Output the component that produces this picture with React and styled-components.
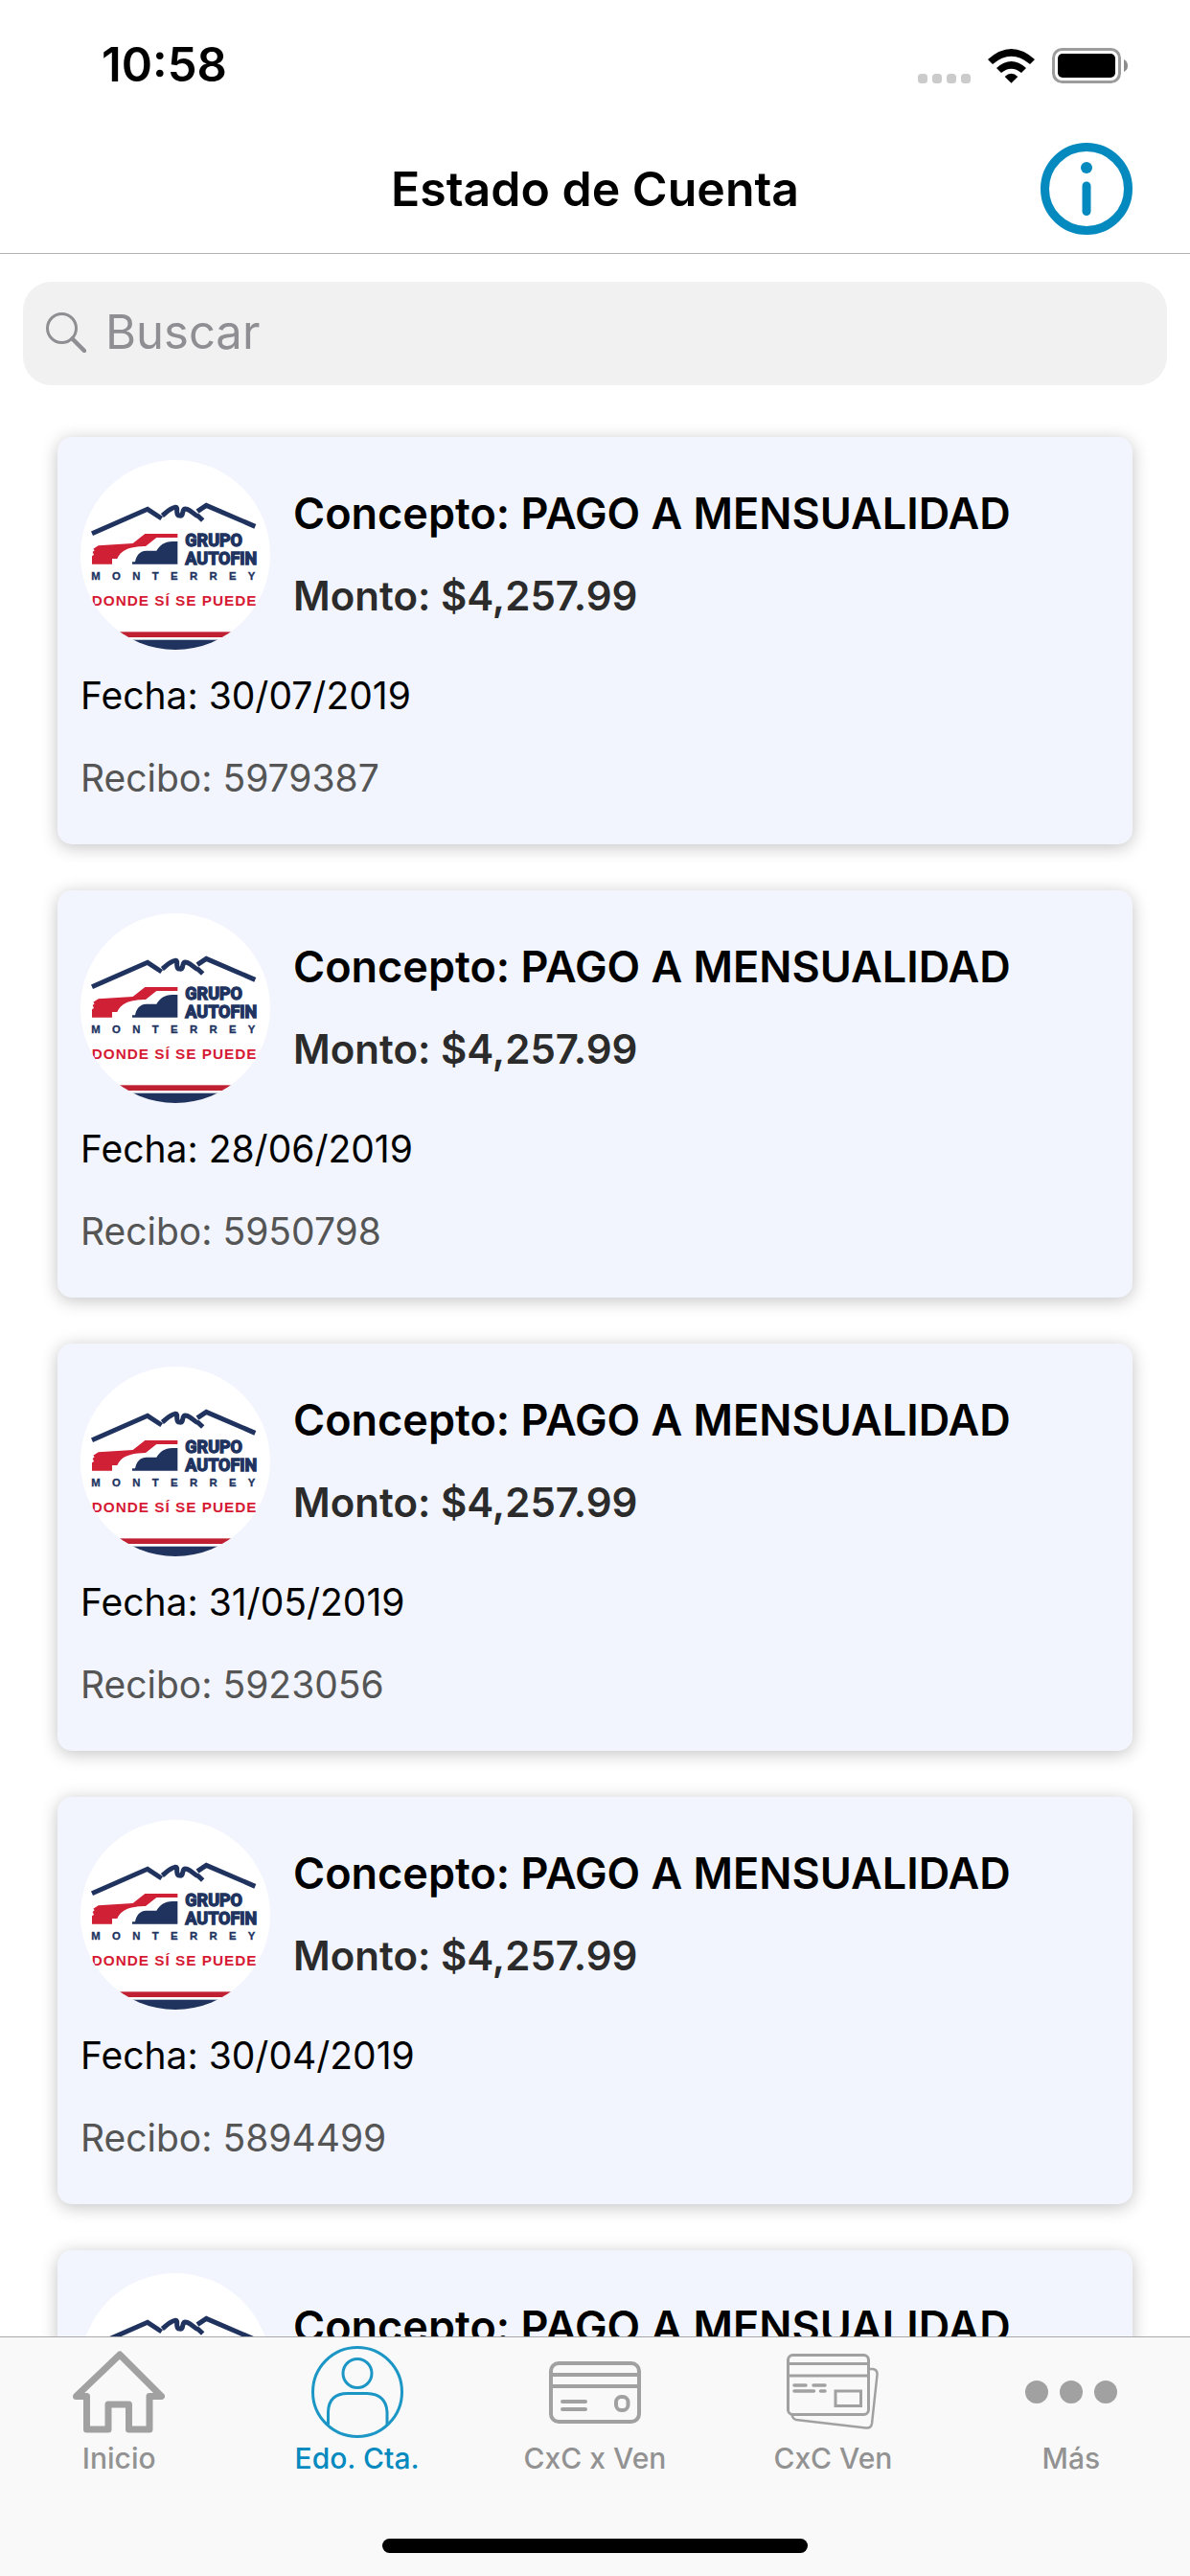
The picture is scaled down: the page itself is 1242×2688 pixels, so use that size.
import React from "react";
import styled, { createGlobalStyle } from "styled-components";

const GlobalStyle = createGlobalStyle`
  * {
    box-sizing: border-box;
  }

  body {
    margin: 0;
    background: #ffffff;
    font-family: Inter, "Liberation Sans", sans-serif;
  }
`;

const ScreenStyled = styled.div`
  display: flex;
  flex-direction: column;
  height: 100vh;
  overflow: hidden;
`;

const StatusBarStyled = styled.div`
  display: flex;
  justify-content: space-between;
  align-items: center;
  height: 132px;
  padding: 4px 65px 0 106px;

  .time {
    font-size: 49px;
    line-height: 60px;
    font-weight: 600;
  }

  .indicators {
    display: flex;
    align-items: flex-end;
    gap: 18px;
  }

  svg {
    display: block;
  }
`;

const NavBarStyled = styled.header`
  display: grid;
  grid-template-columns: 96px 1fr 96px;
  align-items: center;
  height: 133px;
  padding: 0 60px 2px;
  border-bottom: 1px solid #b2b2b2;

  h1 {
    grid-column: 2;
    margin: 0;
    text-align: center;
    font-size: 50px;
    line-height: 60px;
    font-weight: 600;
  }
`;

const IconButton = styled.button`
  width: 96px;
  height: 96px;
  padding: 0;
  border: 0;
  background: none;
  cursor: pointer;

  svg {
    display: block;
  }
`;

const SearchStyled = styled.label`
  display: flex;
  flex: 0 0 auto;
  align-items: center;
  gap: 20px;
  height: 108px;
  margin: 29px 24px 54px;
  padding: 0 24px 2px;
  border-radius: 30px;
  background: #f1f1f2;

  svg {
    flex: 0 0 auto;
  }

  input {
    flex: 1;
    min-width: 0;
    padding: 0;
    border: 0;
    outline: 0;
    background: transparent;
    font-family: inherit;
    font-size: 49px;
    line-height: 60px;
    color: #000000;
  }

  input::placeholder {
    color: #8e8e93;
    opacity: 1;
  }
`;

const ListStyled = styled.main`
  display: flex;
  flex: 1;
  flex-direction: column;
  min-height: 0;
  overflow: hidden;
`;

const CardsStyled = styled.ul`
  display: flex;
  flex-direction: column;
  gap: 48px;
  margin: 0;
  padding: 0 60px;
  list-style: none;
`;

const CardStyled = styled.li`
  flex: 0 0 auto;
  height: 425px;
  padding: 24px;
  border-radius: 15px;
  background: #f2f5fd;
  box-shadow: 0 3px 18px rgba(0, 0, 0, 0.24);
`;

const CardHeadStyled = styled.div`
  display: flex;
  gap: 24px;
  height: 198px;
  margin-bottom: 18px;

  svg {
    flex: 0 0 auto;
  }
`;

const CardTitlesStyled = styled.div`
  padding-top: 26px;
`;

const Concept = styled.h2`
  margin: 0;
  font-size: 45px;
  line-height: 60px;
  font-weight: 600;
  color: #000000;
`;

const Amount = styled.p`
  margin: 26px 0 0;
  font-size: 42px;
  line-height: 60px;
  font-weight: 600;
  color: #2b2b2b;
`;

const Detail = styled.p`
  margin: 0 0 26px;
  font-size: 39px;
  line-height: 60px;
  color: ${(props) => (props.$muted ? "#555555" : "#000000")};
`;

const TabBarStyled = styled.nav`
  flex: 0 0 auto;
  height: 250px;
  padding-top: 9px;
  border-top: 1px solid #a9a9ab;
  background: #f9f9f9;
`;

const TabsStyled = styled.div`
  display: grid;
  grid-template-columns: repeat(5, 1fr);
`;

const TabStyled = styled.a`
  display: flex;
  flex-direction: column;
  align-items: center;
  font-size: 30px;
  line-height: 42px;
  font-weight: 500;
  text-decoration: none;
  color: ${(props) => (props.$active ? "#048abf" : "#929292")};

  svg {
    color: ${(props) => (props.$active ? "#1c96c5" : "#a1a1a1")};
  }
`;

const HomeIndicator = styled.div`
  width: 444px;
  height: 15px;
  margin: 63px auto 0;
  border-radius: 8px;
  background: #000000;
`;

const SignalIcon = () => (
  <svg width="55" height="10" viewBox="0 0 55 10" fill="#cbcbcb">
    <rect width="10" height="10" rx="3.5" />
    <rect x="15" width="10" height="10" rx="3.5" />
    <rect x="30" width="10" height="10" rx="3.5" />
    <rect x="45" width="10" height="10" rx="3.5" />
  </svg>
);

const WifiIcon = () => (
  <svg width="49" height="36" viewBox="0 0 147 108">
    <path d="M0 33Q73.5 -33 147 33L132 48Q73.5 -2 15 48Z" />
    <path d="M27 60Q73.5 18 120 60L105 75Q73.5 49 42 75Z" />
    <path d="M53 87Q73.5 68 94 87L73.5 107Z" />
  </svg>
);

const BatteryIcon = () => (
  <svg width="79" height="37" viewBox="0 0 79 37">
    <rect x="1.5" y="1.5" width="69" height="34" rx="9" fill="none" stroke="#9c9c9c" strokeWidth="3" />
    <rect x="6" y="6" width="60" height="25" rx="5" />
    <path d="M75 12Q79 14 79 18.5T75 25Z" fill="#8c8c8c" />
  </svg>
);

const InfoIcon = () => (
  <svg width="96" height="96" viewBox="0 0 96 96" fill="#048abf">
    <circle cx="48" cy="48" r="43.5" fill="none" stroke="#048abf" strokeWidth="9" />
    <circle cx="48" cy="26" r="6" />
    <rect x="43.5" y="40.5" width="9" height="35.5" rx="4.5" />
  </svg>
);

const SearchIcon = () => (
  <svg width="42" height="42" viewBox="0 0 42 42" fill="none" stroke="#8e8e93">
    <circle cx="16.5" cy="16.5" r="15" strokeWidth="3" />
    <path d="M27.5 27.5L40 40" strokeWidth="4.5" strokeLinecap="round" />
  </svg>
);

const HomeIcon = () => (
  <svg width="96" height="96" viewBox="0 0 96 96" fill="none" stroke="currentColor">
    <path
      d="M49 9L92.5 52.5H80V87H58.5V61H37V87H14.5V52.5H3.5Z"
      strokeWidth="7"
      strokeLinejoin="round"
    />
  </svg>
);

const AccountIcon = () => (
  <svg width="96" height="96" viewBox="0 0 96 96" fill="none" stroke="currentColor" strokeWidth="3">
    <circle cx="48" cy="48" r="46.5" />
    <circle cx="48" cy="28.5" r="15" />
    <path d="M17.5 82V69Q18 49.5 38 49.5H58Q78 50 79 69V82" />
  </svg>
);

const CardIcon = () => (
  <svg width="96" height="96" viewBox="0 0 96 96" fill="none" stroke="currentColor" strokeWidth="4">
    <rect x="2" y="18" width="92" height="61" rx="8" />
    <path d="M2 30H94M2 42H94" />
    <path d="M14 58H38M14 66H38" strokeLinecap="round" />
    <rect x="70" y="53" width="12.5" height="14" rx="5.5" />
  </svg>
);

const CardsIcon = () => (
  <svg width="96" height="96" viewBox="0 0 96 96" fill="none" stroke="currentColor" strokeWidth="3">
    <path d="M86 24H90Q95 25 94.5 30L89 81Q88 86 83 85.5L10 77Q6 76 5.5 71" strokeWidth="2.5" />
    <rect x="1.5" y="9.5" width="84" height="62" rx="5" />
    <path d="M1.5 18.5H85.5M1.5 31H85.5" />
    <path d="M8 41H20M28 41H40M8 47H28.5M35.5 47H40" strokeWidth="3.5" strokeLinecap="round" />
    <rect x="51" y="47" width="26.5" height="15.5" />
  </svg>
);

const MoreIcon = () => (
  <svg width="96" height="96" viewBox="0 0 96 96" fill="currentColor">
    <circle cx="12" cy="48" r="12" />
    <circle cx="48" cy="48" r="12" />
    <circle cx="84" cy="48" r="12" />
  </svg>
);

const Logo = () => (
  <svg width="198" height="198" viewBox="72 90 594 594" role="img" aria-label="Grupo Autofin Monterrey">
    <clipPath id="logo-clip">
      <circle cx="369" cy="387" r="297" />
    </clipPath>
    <g clipPath="url(#logo-clip)">
      <rect x="72" y="90" width="594" height="594" fill="#ffffff" />
      <g fill="none" stroke="#20335f" strokeWidth="15">
        <path d="M108 320L282 244L326 273" />
        <path d="M328 264C342 254 350 242 368 238C376 237 374 244 374 252C375 268 390 268 392 255C394 246 396 240 406 244C422 250 428 262 441 266L455 279" />
        <path d="M438 251L466 232L619 298" />
      </g>
      <path
        d="M108 416V391L114 387L110 378L116 373L112 368L128 358L236 351L274 321H376V333H310L276 360C240 361 202 365 187 399H171V416Z"
        fill="#d02035"
      />
      <path d="M234 416V409H243C247 390 256 375 278 374H310C320 358 334 345 360 345H376V416Z" fill="#20335f" />
      <g
        fill="#20335f"
        stroke="#20335f"
        strokeWidth="4"
        fontFamily="Roboto, sans-serif"
        fontSize="54"
        fontWeight="700"
      >
        <text x="400" y="360">GRUPO</text>
        <text x="400" y="416">AUTOFIN</text>
      </g>
      <text
        x="106"
        y="466"
        fontSize="34"
        letterSpacing="37"
        fontFamily="'Liberation Sans', sans-serif"
        fontWeight="700"
        fill="#20335f"
        stroke="#20335f"
      >
        MONTERREY
      </text>
      <text
        x="107"
        y="545"
        fontSize="46"
        letterSpacing="3"
        fontFamily="'Liberation Sans', sans-serif"
        fontWeight="700"
        fill="#d61a34"
      >
        DONDE SÍ SE PUEDE.
      </text>
      <rect x="72" y="628" width="594" height="17" fill="#bf2133" />
      <rect x="72" y="653" width="594" height="31" fill="#20335f" />
    </g>
  </svg>
);

const payments = [
  { date: "30/07/2019", receipt: "5979387" },
  { date: "28/06/2019", receipt: "5950798" },
  { date: "31/05/2019", receipt: "5923056" },
  { date: "30/04/2019", receipt: "5894499" },
  { date: "", receipt: "" },
];

const tabs = [
  { label: "Inicio", icon: HomeIcon },
  { label: "Edo. Cta.", icon: AccountIcon, active: true },
  { label: "CxC x Ven", icon: CardIcon },
  { label: "CxC Ven", icon: CardsIcon },
  { label: "Más", icon: MoreIcon },
];

const PaymentCard = (props) => {
  const { payment } = props;

  return (
    <CardStyled>
      <CardHeadStyled>
        <Logo />
        <CardTitlesStyled>
          <Concept>Concepto: PAGO A MENSUALIDAD</Concept>
          <Amount>Monto: $4,257.99</Amount>
        </CardTitlesStyled>
      </CardHeadStyled>
      {payment.date && <Detail>Fecha: {payment.date}</Detail>}
      {payment.receipt && <Detail $muted>Recibo: {payment.receipt}</Detail>}
    </CardStyled>
  );
};

const App = () => {
  return (
    <>
      <GlobalStyle />
      <ScreenStyled>
        <StatusBarStyled>
          <div className="time">10:58</div>
          <div className="indicators">
            <SignalIcon />
            <WifiIcon />
            <BatteryIcon />
          </div>
        </StatusBarStyled>
        <NavBarStyled>
          <h1>Estado de Cuenta</h1>
          <IconButton type="button" aria-label="Información">
            <InfoIcon />
          </IconButton>
        </NavBarStyled>
        <ListStyled>
          <SearchStyled>
            <SearchIcon />
            <input type="search" placeholder="Buscar" aria-label="Buscar" />
          </SearchStyled>
          <CardsStyled>
            {payments.map((payment, index) => (
              <PaymentCard key={index} payment={payment} />
            ))}
          </CardsStyled>
        </ListStyled>
        <TabBarStyled>
          <TabsStyled>
            {tabs.map((tab) => (
              <TabStyled key={tab.label} href="#" $active={tab.active}>
                <tab.icon />
                {tab.label}
              </TabStyled>
            ))}
          </TabsStyled>
          <HomeIndicator />
        </TabBarStyled>
      </ScreenStyled>
    </>
  );
};

export default App;
